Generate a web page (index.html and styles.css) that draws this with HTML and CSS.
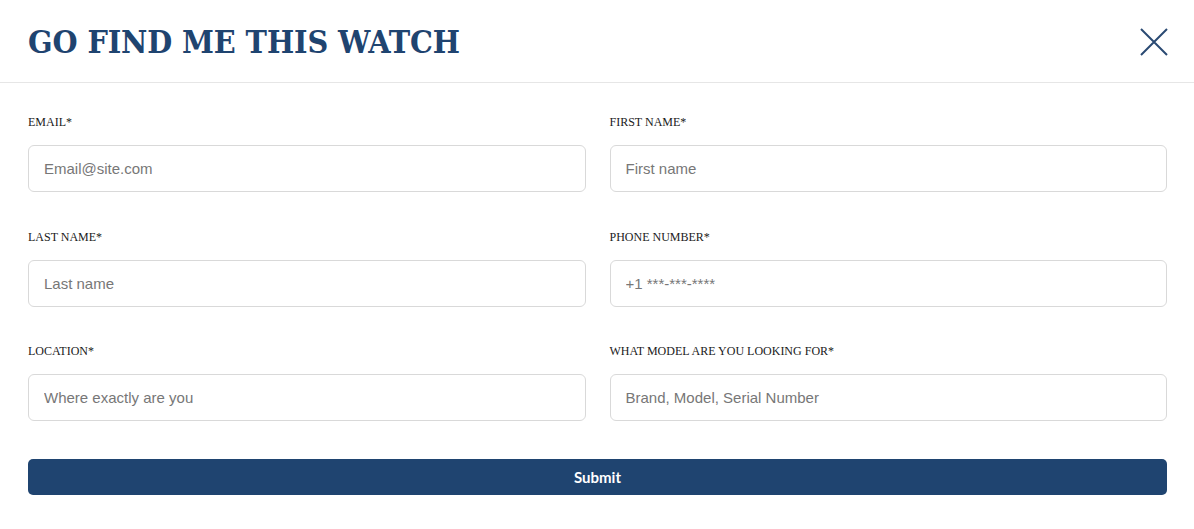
FILE: index.html
```html
<!DOCTYPE html>
<html lang="en">
<head>
<meta charset="utf-8">
<title>Go Find Me This Watch</title>
<link rel="stylesheet" href="styles.css">
</head>
<body>
<div class="modal">
  <header class="modal-header">
    <h1 class="modal-title">GO FIND ME THIS WATCH</h1>
    <button class="close-btn" type="button" aria-label="Close">
      <svg width="28" height="28" viewBox="0 0 28 28"><path d="M1 1 L27 27 M27 1 L1 27" stroke="#2a4a73" stroke-width="2" fill="none"/></svg>
    </button>
  </header>
  <form class="form">
    <div class="grid">
      <div class="field">
        <label class="label">EMAIL*</label>
        <input class="input" type="text" placeholder="Email@site.com">
      </div>
      <div class="field">
        <label class="label">FIRST NAME*</label>
        <input class="input" type="text" placeholder="First name">
      </div>
      <div class="field">
        <label class="label">LAST NAME*</label>
        <input class="input" type="text" placeholder="Last name">
      </div>
      <div class="field">
        <label class="label">PHONE NUMBER*</label>
        <input class="input" type="text" placeholder="+1 ***-***-****">
      </div>
      <div class="field">
        <label class="label">LOCATION*</label>
        <input class="input" type="text" placeholder="Where exactly are you">
      </div>
      <div class="field">
        <label class="label">WHAT MODEL ARE YOU LOOKING FOR*</label>
        <input class="input" type="text" placeholder="Brand, Model, Serial Number">
      </div>
    </div>
    <button class="submit" type="button">Submit</button>
  </form>
</div>
</body>
</html>
```
FILE: styles.css
```css
* { box-sizing: border-box; }
html, body { margin: 0; padding: 0; background: #fff; }
body { font-family: "Liberation Sans", Arial, sans-serif; }

.modal { width: 1194px; }

.modal-header {
  height: 83px;
  border-bottom: 1px solid #e6e6e6;
  display: flex;
  align-items: center;
  justify-content: space-between;
  padding: 0 26px 0 28px;
}

.modal-title {
  margin: 0;
  font-family: "DejaVu Serif", "Liberation Serif", serif;
  font-stretch: condensed;
  font-weight: 700;
  font-size: 32px;
  letter-spacing: -0.1px;
  color: #1f4470;
  line-height: 1;
  padding-top: 2px;
}

.close-btn {
  border: 0;
  background: none;
  padding: 0;
  width: 28px;
  height: 28px;
  display: flex;
  cursor: pointer;
  margin-top: 2px;
}

.form {
  padding: 31px 27px 0 28px;
}

.grid {
  display: grid;
  grid-template-columns: 1fr 1fr;
  column-gap: 24px;
  row-gap: 36.5px;
}

.field {
  display: flex;
  flex-direction: column;
}

.label {
  font-family: "Liberation Serif", "Times New Roman", serif;
  font-size: 12px;
  line-height: 16px;
  color: #1a1a1a;
  margin-bottom: 15px;
}

.input {
  height: 47px;
  border: 1px solid #d9d9d9;
  border-radius: 6px;
  padding: 0 15px;
  font-family: "Liberation Sans", Arial, sans-serif;
  font-size: 15px;
  color: #333;
  background: #fff;
  outline: none;
}

.input::placeholder { color: #777; }

.submit {
  margin-top: 38px;
  width: 100%;
  height: 36px;
  border: 0;
  border-radius: 5px;
  background: #1f4470;
  color: #fff;
  font-family: Lato, "Open Sans", sans-serif;
  font-weight: 700;
  font-size: 15px;
  cursor: pointer;
}
```
